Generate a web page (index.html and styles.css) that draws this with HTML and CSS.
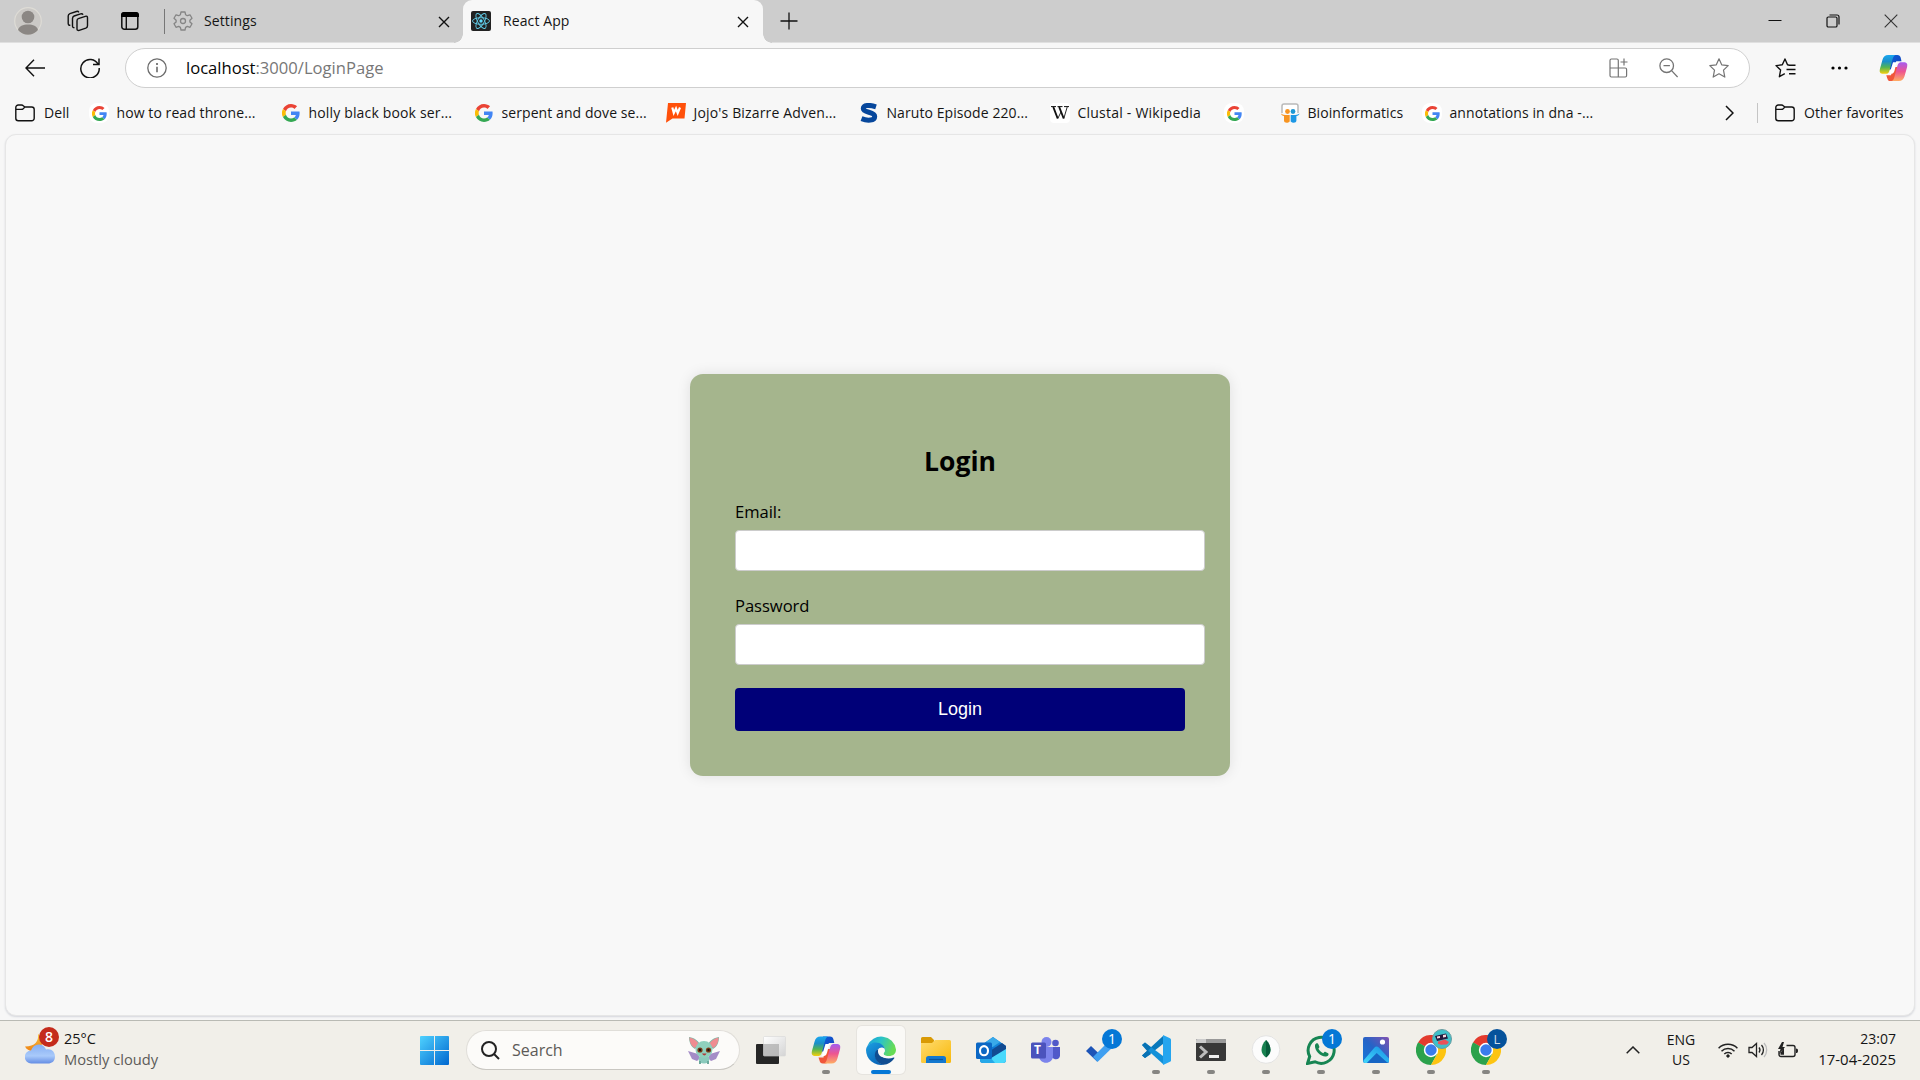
FILE: index.html
```html
<!DOCTYPE html>
<html lang="en">
<head>
<meta charset="utf-8">
<title>React App</title>
<link rel="stylesheet" href="styles.css">
</head>
<body>
<svg class="defs" width="0" height="0" aria-hidden="true">
  <defs>
    <linearGradient id="cpA" x1="0" y1="0" x2="0" y2="1"><stop offset="0" stop-color="#1aa7f0"/><stop offset=".35" stop-color="#1b8fc9"/><stop offset=".65" stop-color="#52b453"/><stop offset="1" stop-color="#f5cf0c"/></linearGradient>
    <linearGradient id="cpB" x1="0" y1="0" x2="0" y2="1"><stop offset="0" stop-color="#a55cf0"/><stop offset=".5" stop-color="#ee5590"/><stop offset="1" stop-color="#ffad63"/></linearGradient>
    <linearGradient id="cpC" x1="0" y1="0" x2="1" y2="1"><stop offset="0" stop-color="#0c62dc"/><stop offset="1" stop-color="#1740b8"/></linearGradient>
    <linearGradient id="win" x1="0" y1="0" x2="1" y2="1"><stop offset="0" stop-color="#4fd2ff"/><stop offset="1" stop-color="#0067cf"/></linearGradient>
    <linearGradient id="edgeTop" x1="0" y1="0" x2="1" y2=".3"><stop offset="0" stop-color="#189fdc"/><stop offset=".5" stop-color="#2bc3c7"/><stop offset="1" stop-color="#67dc55"/></linearGradient>
    <linearGradient id="edgeLow" x1="0" y1="0" x2=".6" y2="1"><stop offset="0" stop-color="#1ca0e2"/><stop offset="1" stop-color="#0965b8"/></linearGradient>
    <linearGradient id="fold" x1="0" y1="0" x2="1" y2="1"><stop offset="0" stop-color="#ffdc70"/><stop offset="1" stop-color="#f8b80a"/></linearGradient>
    <linearGradient id="cloud" x1="0" y1="0" x2="0" y2="1"><stop offset="0" stop-color="#85aef2"/><stop offset=".6" stop-color="#a9cafa"/><stop offset="1" stop-color="#648de4"/></linearGradient>
    <linearGradient id="moon" x1="0" y1="0" x2="0" y2="1"><stop offset="0" stop-color="#f8c33d"/><stop offset="1" stop-color="#ee8215"/></linearGradient>
    <linearGradient id="photo" x1="0" y1="1" x2="1" y2="0"><stop offset="0" stop-color="#1578d8"/><stop offset=".5" stop-color="#2563c7"/><stop offset="1" stop-color="#8252b0"/></linearGradient>
    <linearGradient id="hill" x1="0" y1="1" x2="1" y2="0"><stop offset="0" stop-color="#44d8fa"/><stop offset="1" stop-color="#168ee5"/></linearGradient>
    <linearGradient id="pane" x1="0" y1="0" x2="1" y2="1"><stop offset="0" stop-color="#fff"/><stop offset="1" stop-color="#d4d4d4"/></linearGradient>
    <symbol id="google" viewBox="0 0 48 48">
      <path fill="#ea4335" d="M24 9.500c3.500 0 6.700 1.200 9.200 3.600l6.900-6.900C35.900 2.400 30.500 0 24 0 14.600 0 6.500 5.400 2.600 13.200l8 6.200C12.400 13.700 17.700 9.500 24 9.500z"/>
      <path fill="#4285f4" d="M47 24.500c0-1.600-.2-3.100-.4-4.500H24v9h12.900c-.6 3-2.200 5.500-4.700 7.200l7.700 6C44.400 38 47 31.800 47 24.500z"/>
      <path fill="#fbbc05" d="M10.500 28.600a14.500 14.500 0 0 1 0-9.200l-8-6.200a24 24 0 0 0 0 21.600z"/>
      <path fill="#34a853" d="M24 48c6.500 0 11.900-2.100 15.900-5.800l-7.700-6c-2.200 1.500-4.900 2.300-8.200 2.300-6.300 0-11.600-4.200-13.500-9.900l-8 6.200C6.500 42.600 14.600 48 24 48z"/>
    </symbol>
    <symbol id="folder" viewBox="0 0 20 18">
      <path d="M.8 3.500A2.500 2.500 0 0 1 3.300 1h3.200c.8 0 1.300.3 1.800.8L9.800 3h6.900a2.500 2.500 0 0 1 2.500 2.500v8.800a2.500 2.500 0 0 1-2.500 2.500H3.300a2.500 2.500 0 0 1-2.500-2.500zM.9 5.400h5.400c.8 0 1.400-.2 1.900-.7L9.800 3" fill="none" stroke="#111" stroke-width="1.400"/>
    </symbol>
    <symbol id="copilot" viewBox="0 0 30 30">
      <path d="M12 1.500h7c2 0 2.900 1 3.400 2.700L23.300 8h-5.500l-2 8.500H9z" fill="url(#cpC)"/>
      <path d="M7.500 22.500h5L14 14h7l-2.600 9.500C17.600 26.800 16.600 28.500 14 28.500h-2.200c-2 0-2.700-1-3.200-2.700z" fill="#f0563a"/>
      <path d="M9.500 1.500H17c-1.800.7-2.400 2.500-3 4.500l-3.300 12c-.7 2.600-2.200 3-4.500 3H4.800C1 21 .2 19.500 1 15.800L3.600 6.500C4.500 3.200 6.300 1.500 9.500 1.500z" fill="url(#cpA)"/>
      <path d="M20.500 28.500H13c1.800-.7 2.400-2.500 3-4.500l3.300-12c.7-2.600 2.200-3 4.500-3h1.400c3.800 0 4.600 1.500 3.800 5.200l-2.600 9.300c-.9 3.300-2.700 5-5.900 5z" fill="url(#cpB)"/>
      <path d="M14.500 9h4.600c-.9.800-1.300 2-1.700 3.500l-1.300 5c-.6 2-1.300 3.200-3 3.500h-2.300z" fill="#fff"/>
    </symbol>
    <symbol id="chrome" viewBox="0 0 30 30">
      <path d="M15 15L2 7.500A15 15 0 0 1 28 7.500z" fill="#e33b2e"/>
      <path d="M2 7.500A15 15 0 0 0 15 30l6.300-11.200L15 15z" fill="#2ba24c"/>
      <path d="M28 7.500A15 15 0 0 1 15 30l6.300-11.200L21.500 8z" fill="#fdc411"/>
      <path d="M2 7.500L8.800 19l6.200-4z" fill="#2ba24c"/><path d="M15 8h13v-.5L15 6z" fill="#e33b2e"/>
      <circle cx="15" cy="15" r="7.200" fill="#fff"/><circle cx="15" cy="15" r="5.700" fill="#3a7cec"/>
    </symbol>
  </defs>
</svg>

<header class="titlebar">
  <div class="window-tools">
    <svg width="28" height="28" viewBox="0 0 28 28"><circle cx="14" cy="14" r="13.300" fill="#cbc9c6" stroke="#dedcd6" stroke-width="1.200"/><circle cx="14" cy="10" r="6.300" fill="#8b8784"/><path d="M4 23c1-4 5-5.500 10-5.500S23 19 24 23a13 13 0 0 1-20 0z" fill="#8b8784"/></svg>
    <svg width="22" height="22" viewBox="0 0 22 22" fill="none" stroke="#111" stroke-width="1.400"><path d="M11.300 8.600l7-2.300c1.400-.4 2.200.2 2.200 1.500v8c0 1.200-.6 2-1.700 2.400l-6.600 2.200c-1.300.4-2.200-.2-2.200-1.500v-8c0-1.200.3-2 1.300-2.300z"/><path d="M7.500 17.600c-1.400.2-2-.5-2-1.600V8.400c0-1.200.5-2 1.600-2.400l6.500-2.100c1.200-.4 2 0 2.400.9"/><path d="M3.300 15.200c-1.400.2-2.100-.5-2.100-1.600V6c0-1.200.6-2 1.700-2.400l6.500-2.100c1.200-.4 2 0 2.400.9"/></svg>
    <svg width="20" height="20" viewBox="0 0 20 20"><rect x="1.800" y="1.800" width="16" height="16.400" rx="2.500" fill="none" stroke="#111" stroke-width="1.500"/><path d="M1 6V4a3 3 0 0 1 3-3h12a3 3 0 0 1 3 3v2z" fill="#000"/><path d="M6.300 6v12" stroke="#111" stroke-width="1.400"/></svg>
  </div>
  <div class="tab tab-idle">
    <svg width="20" height="20" viewBox="0 0 20 20" fill="none" stroke="#858585" stroke-width="1.300"><path d="M8 1h4l.6 2.700 1.700 1 2.700-.9 2 3.500-2.100 1.900v1.700l2.100 1.900-2 3.500-2.700-.9-1.700 1L12 19H8l-.6-2.600-1.700-1-2.700.9-2-3.500 2.100-1.900V9.200L1 7.300l2-3.500 2.700.9 1.700-1z" stroke-linejoin="round"/><circle cx="10" cy="10" r="2.500"/></svg>
    <span class="tab-title">Settings</span>
    <svg class="tab-close" width="12" height="12" viewBox="0 0 12 12"><path d="M1 1l10 10M11 1L1 11" stroke="#111" stroke-width="1.400"/></svg>
  </div>
  <div class="tab tab-active">
    <svg width="20" height="20" viewBox="0 0 20 20"><rect width="20" height="20" rx="2" fill="#222"/><g fill="none" stroke="#61cde9" stroke-width=".9"><ellipse cx="10" cy="10" rx="8.500" ry="3.300"/><ellipse cx="10" cy="10" rx="8.500" ry="3.300" transform="rotate(60 10 10)"/><ellipse cx="10" cy="10" rx="8.500" ry="3.300" transform="rotate(120 10 10)"/></g><circle cx="10" cy="10" r="1.700" fill="#61dafb"/></svg>
    <span class="tab-title">React App</span>
    <svg class="tab-close" width="12" height="12" viewBox="0 0 12 12"><path d="M1 1l10 10M11 1L1 11" stroke="#111" stroke-width="1.400"/></svg>
  </div>
  <svg class="new-tab" width="18" height="18" viewBox="0 0 18 18"><path d="M9 .5v17M.5 9h17" stroke="#111" stroke-width="1.300"/></svg>
  <div class="window-controls">
    <svg width="14" height="14" viewBox="0 0 14 14"><path d="M.5 6.500h13" stroke="#111"/></svg>
    <svg width="14" height="14" viewBox="0 0 14 14" fill="none" stroke="#111" stroke-width="1.200"><rect x="1" y="3" width="10" height="10" rx="1.300"/><path d="M3.500 1H11a2 2 0 0 1 2 2v7.500"/></svg>
    <svg width="14" height="14" viewBox="0 0 14 14"><path d="M.7.7l12.600 12.600M13.300.7L.7 13.300" stroke="#333" stroke-width="1.100"/></svg>
  </div>
</header>

<div class="toolbar">
  <div class="nav">
    <svg width="20" height="18" viewBox="0 0 20 18" fill="none" stroke="#111" stroke-width="1.400"><path d="M9 .8L1 9l8 8.200M1 9h19"/></svg>
    <svg width="20" height="20" viewBox="0 0 20 20" fill="none" stroke="#111" stroke-width="1.500"><path d="M18.200 6.500A9.200 9.200 0 1 0 19.200 10M19 .5v6h-6"/></svg>
  </div>
  <div class="address">
    <svg width="20" height="20" viewBox="0 0 20 20"><circle cx="10" cy="10" r="9.200" fill="none" stroke="#6c6c6c" stroke-width="1.300"/><path d="M10 8.700v5.500" stroke="#555" stroke-width="1.400"/><circle cx="10" cy="6" r="1" fill="#555"/></svg>
    <span class="url">localhost<span class="url-path">:3000/LoginPage</span></span>
    <div class="address-tools">
      <svg width="19" height="20" viewBox="0 0 19 20" fill="none" stroke="#747474" stroke-width="1.200"><path d="M9.300 10H2.400M1 10V2.500C1 1.500 1.600 1 2.400 1h5.500c.9 0 1.400.5 1.400 1.500V19M1 10v7.500C1 18.500 1.600 19 2.400 19h13.800c.8 0 1.400-.5 1.400-1.500V11.500c0-1-.6-1.500-1.400-1.500H1M15 .5v7M11.500 4h7"/></svg>
      <svg width="19" height="20" viewBox="0 0 19 20" fill="none" stroke="#747474" stroke-width="1.300"><circle cx="7.700" cy="7.700" r="6.800"/><path d="M4.500 7.700h6.400M12.600 12.600l6 6.400"/></svg>
      <svg width="20" height="20" viewBox="0 0 20 20" fill="none" stroke="#747474" stroke-width="1.200" stroke-linejoin="round"><path d="M10 .8l2.700 6 6.500.8-4.700 4.500 1.300 7-5.800-3.300-5.800 3.300 1.300-7L.8 7.600l6.500-.8z"/></svg>
    </div>
  </div>
  <div class="browser-tools">
    <svg width="21" height="20" viewBox="0 0 21 20" fill="none" stroke="#111" stroke-width="1.400" stroke-linejoin="round"><path d="M14.500 7.300l-2-.5L10 1 7.300 6.800 1 7.600 5.600 12l-1.200 6.700 5.400-3M14 7.300h6.500M11.500 11.500h9M14 15.700h6.500"/></svg>
    <svg width="17" height="4" viewBox="0 0 17 4"><circle cx="2" cy="2" r="1.600"/><circle cx="8.500" cy="2" r="1.600"/><circle cx="15" cy="2" r="1.600"/></svg>
    <svg width="29" height="30" viewBox="0 0 30 30"><use href="#copilot"/></svg>
  </div>
</div>

<nav class="bookmarks">
  <div class="bookmark"><svg width="20" height="18"><use href="#folder"/></svg><span>Dell</span></div>
  <div class="bookmark"><i class="chip"><svg width="15" height="15"><use href="#google"/></svg></i><span>how to read throne...</span></div>
  <div class="bookmark"><i class="chip chip-plain"><svg width="18" height="18"><use href="#google"/></svg></i><span>holly black book ser...</span></div>
  <div class="bookmark"><i class="chip chip-plain"><svg width="18" height="18"><use href="#google"/></svg></i><span>serpent and dove se...</span></div>
  <div class="bookmark"><svg width="20" height="20" viewBox="0 0 20 20"><path d="M2 0h18l-1.500 15.500H6.500L0 19.800z" fill="#ff500a"/><path d="M6.300 4.500l1.500 5.500L10 5.500l1.700 4.500 2.300-5.500" fill="none" stroke="#fff" stroke-width="2.200"/></svg><span>Jojo's Bizarre Adven...</span></div>
  <div class="bookmark"><svg width="20" height="20" viewBox="0 0 20 20"><path d="M17 3.800C10 1.500 4.500 2 4.300 5.500c-.1 4.800 11.400 2.700 11.400 7.900 0 4.300-7.200 4.600-13.200 2.300" fill="none" stroke="#06479c" stroke-width="5"/></svg><span>Naruto Episode 220...</span></div>
  <div class="bookmark"><i class="chip chip-wiki"><svg width="18" height="14" viewBox="0 0 18 14" fill="none" stroke="#111"><path d="M0 .6h5M6.500 .6h5M13 .6h5" stroke-width="1"/><path d="M2.300 1l4.400 11.500M8.200 1l4.500 11.500" stroke-width="1.900"/><path d="M6.800 12.500L10 6M12.800 12.500L16.200 1" stroke-width=".9"/></svg></i><span>Clustal - Wikipedia</span></div>
  <div class="bookmark"><i class="chip"><svg width="15" height="15"><use href="#google"/></svg></i></div>
  <div class="bookmark"><svg width="20" height="20" viewBox="0 0 20 20"><path d="M2 10V3a2 2 0 0 1 2-2h12a2 2 0 0 1 2 2v7" fill="#fff" stroke="#b9b9b9" stroke-width="1.500"/><circle cx="7.500" cy="8.500" r="2.400" fill="#f79421"/><circle cx="13" cy="8.500" r="2.400" fill="#1c97d5"/><path d="M1 10.500c2 2 6 1.500 8.700 1.500v6.500c-2 2-5.700 1.500-5.700-1v-4.500C2.500 12.800 1.300 12 1 10.500z" fill="#f79421"/><path d="M19.500 10.500c-2 2-6 1.500-8.800 1.500v6.500c2 2 5.700 1.500 5.700-1v-4.500c1.600-.2 2.800-1 3.100-2.500z" fill="#1c97e5"/></svg><span>Bioinformatics</span></div>
  <div class="bookmark"><i class="chip"><svg width="15" height="15"><use href="#google"/></svg></i><span>annotations in dna -...</span></div>
  <svg width="9" height="16" viewBox="0 0 9 16"><path d="M1 1l7 7-7 7" fill="none" stroke="#111" stroke-width="1.500"/></svg>
  <i class="divider"></i>
  <div class="bookmark"><svg width="20" height="18"><use href="#folder"/></svg><span>Other favorites</span></div>
</nav>

<main class="page">
  <form class="login-card">
    <h2>Login</h2>
    <label for="email">Email:</label>
    <input id="email" type="email">
    <label for="password">Password</label>
    <input id="password" type="password">
    <button type="button">Login</button>
  </form>
</main>

<footer class="taskbar">
  <div class="weather">
    <div class="weather-icon">
      <svg width="31" height="30" viewBox="0 0 31 30"><path d="M13 0C14 7 10 12.500 0 12.500c2 4 7 6 12 3.500s7-9 5-13z" fill="url(#moon)"/><path d="M6.500 29.500a6.500 6.500 0 0 1-.5-13C7.500 12 11 10 14.500 10.500c3.500.4 5.500 2.500 6.500 5 5-1.500 9 2 9 7s-3.500 7-7 7z" fill="url(#cloud)"/></svg>
      <b class="badge badge-red">8</b>
    </div>
    <div><p class="temp">25°C</p><p class="sky">Mostly cloudy</p></div>
  </div>
  <div class="start"><svg width="29" height="29" viewBox="0 0 29 29"><path d="M1 0h13v14H0V1a1 1 0 0 1 1-1zM15 0h13a1 1 0 0 1 1 1v13H15zM0 15h14v14H1a1 1 0 0 1-1-1zM15 15h14v13a1 1 0 0 1-1 1H15z" fill="url(#win)"/></svg></div>
  <div class="search">
    <svg width="19" height="19" viewBox="0 0 19 19" fill="none" stroke="#222" stroke-width="2"><circle cx="8" cy="8" r="7"/><path d="M13 13l5 5"/></svg>
    <span>Search</span>
    <svg width="32" height="28" viewBox="0 0 32 28"><path d="M0 15l10 3 2 4-3 3-5-2zM32 15l-10 3-2 4 3 3 5-2z" fill="#a48cc7"/><path d="M1 1c6 1 9 4 11 7l-5 5C3 11 1 6 1 1zM31 1c-6 1-9 4-11 7l5 5c4-2 6-7 6-12z" fill="#7ab9a8"/><path d="M1.500 1.500c4.500 1 7.500 3.500 9 6L7 12C3 10 1.500 6 1.500 1.500zM30.500 1.500c-4.500 1-7.500 3.500-9 6L25 12c4-2 5.500-6 5.500-10.500z" fill="#ef8c91"/><ellipse cx="16" cy="23" rx="5.500" ry="4.500" fill="#8bcabc"/><ellipse cx="16" cy="13.500" rx="8.500" ry="8.500" fill="#8fd0bd"/><circle cx="12" cy="14" r="2.600" fill="#7b3b18"/><circle cx="20.500" cy="14" r="2.600" fill="#7b3b18"/><circle cx="12" cy="14" r="1.200" fill="#1d1210"/><circle cx="20.500" cy="14" r="1.200" fill="#1d1210"/><path d="M14 17.500h4.500q-2 4-4.500 0" fill="#b23a3a"/><path d="M12 25v3M20 25v3" stroke="#6ca99c" stroke-width="2"/></svg>
  </div>
  <div class="apps">
    <div class="app"><svg width="30" height="30" viewBox="0 0 30 30"><rect x="0" y="9" width="23" height="20" rx="1" fill="#262626"/><rect x="7.500" y="1.500" width="22" height="19.500" rx="1" fill="url(#pane)" stroke="#d6d6d6" stroke-width=".6"/><path d="M7.500 9H23v12H7.500z" fill="#aaa" fill-opacity=".7"/></svg></div>
    <div class="app running"><svg width="30" height="30"><use href="#copilot"/></svg></div>
    <div class="app current"><svg width="30" height="30" viewBox="0 0 30 30"><path d="M1.200 11A15 15 0 0 1 30 14.500c0 4.500-3.200 6.500-7 6.500-4.500 0-6-1.500-5.500-2.600 2-2.400 1.500-5.700-1-7.900C12 7.200 5 7.500 1.200 11z" fill="url(#edgeTop)"/><path d="M0 15C.5 9.500 5.500 7.500 9.500 7.500c5.500 0 9.500 3.500 9.300 7.700-2-3-6.800-2.500-8.500 1.300C8 22 11 28.500 18 29.700A15 15 0 0 1 0 15z" fill="url(#edgeLow)"/><path d="M11 14.800C6 20 10.500 29 17.500 29.800 22 29.500 26 27 28.300 23.300c.3-.6-.2-1-.7-.7-4.500 2-11 1.100-13.600-3.300-1-1.500-.8-3-.2-4.700-1 .1-2.100 0-2.800.2z" fill="#104d91"/><path d="M12 15.500c-.6 5.500 5 8.500 12 7l4-2c-4 1.500-10.500 1-10.500-2.100 1.800-2 1.500-4 .8-5-2-2-6-.6-6.300 2.100z" fill="#faf9f6"/></svg></div>
    <div class="app"><svg width="30" height="30" viewBox="0 0 30 30"><path d="M0 3.500a1.500 1.500 0 0 1 1.500-1.500H10l3 3v5H0z" fill="#d99a05"/><path d="M0 8h11l3-3h14.500A1.500 1.500 0 0 1 30 6.500v20a1.500 1.500 0 0 1-1.500 1.500h-27A1.500 1.500 0 0 1 0 26.500z" fill="url(#fold)"/><path d="M5 28v-4.500A2.500 2.500 0 0 1 7.500 21h15a2.500 2.500 0 0 1 2.500 2.500V28z" fill="#1378cf"/><path d="M8 24.500h14" stroke="#0b549c" stroke-width="1.200"/></svg></div>
    <div class="app"><svg width="30" height="30" viewBox="0 0 30 30"><path d="M4 11L17 2l13 9v10H4z" fill="#1384d8"/><path d="M10 7l7-5 7 5-9 6z" fill="#39a9e9"/><path d="M4 12h26v13a3 3 0 0 1-3 3H7a3 3 0 0 1-3-3z" fill="#0f78d4"/><path d="M14 16l12-8 4 3v4l-16 9z" fill="#114a92"/><path d="M30 14v11a3 3 0 0 1-3 3H7z" fill="#49d9fc"/><path d="M14 22l5 6H7a3 3 0 0 1-3-3v-4z" fill="#25a8e8"/><rect y="7.500" width="16" height="16.500" rx="1.500" fill="#0b67c4"/><ellipse cx="8" cy="15.700" rx="4" ry="4.600" fill="none" stroke="#fff" stroke-width="2.100"/></svg></div>
    <div class="app"><svg width="30" height="30" viewBox="0 0 30 30"><circle cx="15.500" cy="7" r="5" fill="#7b83eb"/><circle cx="24.500" cy="8" r="3.300" fill="#5059c9"/><path d="M20 12h9v8.500c0 4-5 5-8 2z" fill="#5059c9"/><path d="M8 12h14v9c0 9-14 9-14 0z" fill="#7b83eb"/><rect y="7.500" width="15" height="16" rx="1.500" fill="#4b53bc"/></svg><b class="teams-t">T</b></div>
    <div class="app"><svg width="30" height="30" viewBox="0 0 30 30"><path d="M0 16l5-5 11 10.500-5 5z" fill="#1d54b7"/><path d="M7 22L26 3l5 5-19.500 19z" fill="#3f9ff0"/></svg><b class="badge">1</b></div>
    <div class="app running"><svg width="30" height="30" viewBox="0 0 30 30"><path d="M1 20.500L22 1v8L4 23z" fill="#0878bb"/><path d="M1 10L4 7.500 22 21v8z" fill="#1390d8"/><path d="M22 0l7 3.200c.7.400 1 .8 1 1.500v20.600c0 .8-.3 1.200-1 1.500L22 30z" fill="#25a5ef"/><path d="M1 10l3-2.500 6 5-3.500 4zM1 20.500l5-4.500 4 3L4 23z" fill="#0872b4"/></svg></div>
    <div class="app running"><svg width="30" height="30" viewBox="0 0 30 30"><rect y="4" width="30" height="22" rx="1.500" fill="#383838"/><path d="M1.500 4h27A1.500 1.500 0 0 1 30 5.500V8H0V5.500A1.500 1.500 0 0 1 1.500 4z" fill="#999"/><path d="M0 8V5.500A1.500 1.500 0 0 1 1.500 4H10v4z" fill="#ccc"/><path d="M4 11.500l6 5.500-6 5.500" fill="none" stroke="#bbb" stroke-width="3"/><path d="M13 21.500h10" stroke="#eee" stroke-width="3"/></svg></div>
    <div class="app running"><svg width="30" height="30" viewBox="0 0 30 30"><circle cx="15" cy="14.500" r="13.800" fill="#fcfcfc" stroke="#dedede" stroke-width=".8"/><path d="M15 5c3 3 4.500 6.500 4.500 10 0 3-2 5.500-4.500 7.500-2.500-2-4.500-4.500-4.500-7.500C10.500 11.500 12 8 15 5z" fill="#17814f"/><path d="M15 5c3 3 4.500 6.500 4.500 10 0 3-2 5.500-4.500 7.500z" fill="#075c3b"/></svg></div>
    <div class="app running"><svg width="30" height="30" viewBox="0 0 30 30"><path d="M1.500 28.500l2.200-7A13 13 0 1 1 9 26.800z" fill="none" stroke="#178553" stroke-width="3"/><path d="M9 10c1-2.500 3-2 3.500-.5l.8 2c.3.800-.1 1.300-.9 2.200 1.300 2.300 3 3.600 5 4.500 1-1.300 1.500-1.600 2.200-1.300l2.500 1.300c.7.400.5 1.500 0 2.300C18.500 24.500 8 17 9 10z" fill="#178553"/></svg><b class="badge">1</b></div>
    <div class="app running"><svg width="30" height="30" viewBox="0 0 30 30"><rect x="2" y="2" width="26" height="26" rx="2" fill="url(#photo)"/><path d="M13.500 17.500L16 15l12 11c-.2 1.400-1 2-2 2H6z" fill="#1765c4"/><path d="M2.500 25.500L13.300 12.700c1.400-1.700 3-1.700 4.500-.1L28 23.500v3.200c-.5.800-1.200 1-2 .6L15.700 18 5.800 28H4c-1 0-1.800-1-1.500-2.500z" fill="url(#hill)"/><circle cx="21.500" cy="7" r="2.600" fill="#fff"/></svg></div>
    <div class="app running"><svg width="30" height="30"><use href="#chrome"/></svg><b class="badge badge-face"><svg width="20" height="20" viewBox="0 0 20 20"><circle cx="10" cy="10" r="9.500" fill="#3fc0ca" stroke="#6b9da0"/><path d="M3 7l11-2.500 2 5L5 12z" fill="#251b3d"/><path d="M5 7.500l3-.6v2l-3 .5zM11 6l3-.6v2.500l-3 .5z" fill="#f6d8df"/><path d="M6 12.500l7-2 4 2.500-2 2.500-6 .3-3-1z" fill="#ea5159"/></svg></b></div>
    <div class="app running"><svg width="30" height="30"><use href="#chrome"/></svg><b class="badge badge-navy">L</b></div>
  </div>
  <div class="tray">
    <svg class="chevron" width="14" height="8" viewBox="0 0 14 8"><path d="M.7 7.300L7 1l6.300 6.300" fill="none" stroke="#222" stroke-width="1.500"/></svg>
    <div class="lang"><p>ENG</p><p>US</p></div>
    <div class="status">
      <svg width="20" height="15" viewBox="0 0 20 15" fill="none" stroke="#222" stroke-width="1.500"><path d="M.6 5.300a13.200 13.200 0 0 1 18.800 0M3.500 8.200a9.200 9.200 0 0 1 13 0M6.300 11a5.200 5.200 0 0 1 7.400 0"/><circle cx="10" cy="13" r="1.300" fill="#222" stroke-width=".8"/></svg>
      <svg width="20" height="16" viewBox="0 0 20 16" fill="none" stroke="#222" stroke-width="1.300"><path d="M1 5.500v5h3l4.500 4V1.500L4 5.500zM11 5.500a4 4 0 0 1 0 5M13.500 3a7.500 7.500 0 0 1 0 10"/><path d="M16 1a10.500 10.500 0 0 1 0 14" stroke="#bbb"/></svg>
      <svg width="20" height="16" viewBox="0 0 20 16"><path d="M8.500 3.500H15a2 2 0 0 1 2 2v7a2 2 0 0 1-2 2H3a2 2 0 0 1-2-2V9" fill="none" stroke="#222" stroke-width="1.400"/><path d="M18 6.500c1.500 0 2 .8 2 2.300s-.5 2.300-2 2.300zM4 0L0 7h2.500L1 12.500 7 5H4.500L6 0zM2.500 12.700V10L6 6.500v6.200z" fill="#222"/></svg>
    </div>
    <div class="clock"><p class="time">23:07</p><p class="date">17-04-2025</p></div>
  </div>
</footer>
</body>
</html>
```
FILE: styles.css
```css
* { box-sizing: border-box; }
body {
  margin: 0;
  width: 1920px;
  height: 1080px;
  overflow: hidden;
  display: flex;
  flex-direction: column;
  background: #f7f7f7;
  color: #151515;
  font: 14px/20px "Open Sans", "Noto Sans", sans-serif;
}
p { margin: 0; }
svg { flex: none; display: block; }
.defs { position: absolute; }
span, p { white-space: nowrap; }

/* Tab strip */
.titlebar {
  height: 43px;
  display: flex;
  background: #cdcdcd;
  border-bottom: 1px solid #e0e0e0;
}
.window-tools {
  width: 165px;
  height: 42px;
  padding-left: 14px;
  display: flex;
  align-items: center;
  flex: none;
}
.window-tools svg:nth-child(2) { margin-left: 25px; }
.window-tools svg:nth-child(3) { margin-left: 31px; }
.tab {
  height: 42px;
  display: flex;
  align-items: center;
  position: relative;
  flex: none;
}
.tab-idle { width: 298px; padding: 0 13px 0 8px; }
.tab-idle::before {
  content: "";
  position: absolute;
  left: -1px;
  top: 9px;
  width: 1px;
  height: 25px;
  background: #777;
}
.tab-title { margin-left: 11px; letter-spacing: .1px; }
.tab-close { margin-left: auto; margin-top: 2px; }
.tab-active {
  width: 300px;
  height: 43px;
  padding: 0 14px 1px 8px;
  background: #f7f7f7;
  border-radius: 9px 9px 0 0;
}
.tab-active .tab-title { margin-left: 12px; }
.tab-active::before,
.tab-active::after {
  content: "";
  position: absolute;
  bottom: 0;
  width: 9px;
  height: 9px;
}
.tab-active::before { left: -9px; background: radial-gradient(circle at 0 0, #cdcdcd 8.500px, #f7f7f7 9px); }
.tab-active::after { right: -9px; background: radial-gradient(circle at 100% 0, #cdcdcd 8.500px, #f7f7f7 9px); }
.new-tab { margin: 12px 0 0 17px; }
.window-controls {
  margin-left: auto;
  padding-right: 22px;
  height: 42px;
  display: flex;
  align-items: center;
  gap: 44px;
}

/* Address row */
.toolbar { height: 50px; display: flex; align-items: center; flex: none; }
.nav { width: 125px; padding-left: 25px; display: flex; align-items: center; gap: 35px; flex: none; }
.address {
  width: 1625px;
  height: 40px;
  flex: none;
  padding: 0 20px 0 21px;
  display: flex;
  align-items: center;
  background: #fff;
  border: 1px solid #cfcfcf;
  border-radius: 20px;
}
.url { margin-left: 19px; font-size: 16.600px; color: #050505; }
.url-path { color: #777; }
.address-tools { margin-left: auto; display: flex; align-items: center; gap: 31px; }
.browser-tools { flex: 1; padding: 0 12px 0 25px; display: flex; align-items: center; justify-content: space-between; }
.browser-tools svg:nth-child(2) { margin-left: 3px; }

/* Favorites */
.bookmarks {
  height: 41px;
  flex: none;
  padding: 0 0 1px 15px;
  display: grid;
  grid-template-columns: 74px 192px 193px 192px 193px 191px 174px 56px 142px 303px 32px 18px 1fr;
  align-items: center;
}
.bookmark { display: flex; align-items: center; gap: 7.500px; letter-spacing: .08px; }
.bookmark:first-child, .bookmark:last-child { gap: 9px; }
.bookmark:nth-child(7) { letter-spacing: .22px; }
.bookmark:nth-child(3), .bookmark:nth-child(5) { letter-spacing: .16px; }
.chip {
  width: 20px;
  height: 20px;
  flex: none;
  display: flex;
  align-items: center;
  justify-content: center;
  border-radius: 8px;
  background: #fff;
}
.chip-plain { background: none; }
.chip-wiki { border-radius: 4px; }
.divider { width: 1px; height: 20px; background: #c5c5c5; }

/* Page */
.page {
  width: 1910px;
  height: 882px;
  flex: none;
  margin-left: 5px;
  display: flex;
  align-items: center;
  justify-content: center;
  border: 1px solid #e6e6e6;
  border-radius: 11px;
  background: #f8f8f8;
  box-shadow: 0 1px 2px #d4d6dc;
}
.login-card {
  width: 540px;
  height: 402px;
  padding: 69px 45px 45px;
  background: #a5b58d;
  border-radius: 13px;
  box-shadow: 0 0 14px rgba(0, 0, 0, .1);
  color: #000;
}
.login-card h2 { margin: 0 0 21px; font-size: 26.500px; line-height: 36px; text-align: center; }
.login-card label { display: block; margin-bottom: 6px; font-size: 16.600px; line-height: 24px; letter-spacing: -.05px; }
.login-card input {
  display: block;
  width: 470px;
  height: 41px;
  margin: 0 0 23px;
  padding: 10px;
  border: 1px solid #ccc;
  border-radius: 4px;
  background: #fff;
}
.login-card button {
  width: 450px;
  height: 43px;
  padding: 0;
  border: 0;
  border-radius: 4px;
  background: #000078;
  color: #fff;
  font: 18px "Liberation Sans", Arial, sans-serif;
}

/* Taskbar */
.taskbar {
  height: 60px;
  margin-top: auto;
  flex: none;
  display: grid;
  grid-template-columns: 407px 55px 281.500px 770px 1fr;
  align-items: center;
  background: #f1efe9;
  border-top: 1px solid #b9bab4;
}
.weather { display: flex; align-items: center; gap: 8px; padding: 0 0 3px 25px; }
.weather-icon { position: relative; margin-top: -1px; }
.temp { font-size: 14.500px; }
.sky { font-size: 14.700px; color: #5d5c59; }
.badge {
  position: absolute;
  top: -7px;
  left: 15px;
  width: 20px;
  height: 20px;
  border-radius: 50%;
  background: #0477d6;
  color: #fff;
  font-size: 14px;
  font-weight: 400;
  text-align: center;
}
.badge-red { left: 14px; background: #c42b1c; font-weight: 600; }
.start { display: flex; justify-content: center; }
.search {
  width: 274px;
  height: 40px;
  margin: -1px 0 0 4px;
  padding: 0 19px 0 14px;
  display: flex;
  align-items: center;
  border: 1px solid #e0ded9;
  border-bottom-color: #c9c7c2;
  border-radius: 20px;
  background: #fcfbf9;
}
.search span { margin-left: 12px; font-size: 16px; color: #5c5a57; }
.search svg:last-child { margin-left: auto; }
.apps { display: grid; grid-template-columns: repeat(14, 55px); margin-top: -1px; }
.app {
  width: 48px;
  height: 48px;
  margin-left: 3.500px;
  display: flex;
  align-items: center;
  justify-content: center;
  position: relative;
}
.running::after,
.current::after {
  content: "";
  position: absolute;
  bottom: 0;
  left: 20px;
  width: 8px;
  height: 4px;
  border-radius: 2px;
  background: #868582;
}
.current { background: #faf9f6; border-radius: 5px; box-shadow: 0 0 0 1px #e6e4df; }
.current::after { left: 14px; width: 20px; background: #0477d6; }
.app .badge { top: 3px; left: 25px; }
.app .badge-navy { background: #05529b; color: #cfdcea; font-size: 13px; }
.app .badge-face { background: none; }
.teams-t { position: absolute; left: 12px; top: 14px; font-size: 12px; color: #fff; }
.tray { display: flex; align-items: center; padding: 0 0 1px 112.500px; }
.lang { width: 56px; margin-left: 13px; text-align: center; }
.status { display: flex; align-items: center; gap: 10px; margin-left: 9px; }
.clock { margin-left: auto; padding: 0 24px 2px 0; text-align: right; }
.date { font-size: 14.900px; }
```
